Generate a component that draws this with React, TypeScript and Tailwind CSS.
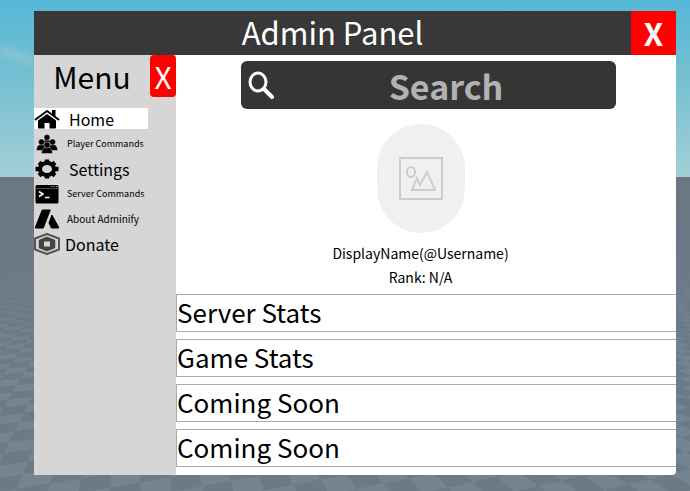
import type { ReactNode } from "react";

type MenuItem = {
  label: string;
  icon: ReactNode;
  textClass: string;
  active?: boolean;
};

function HomeIcon() {
  return (
    <svg className="w-[26px] h-5" viewBox="0 0 52 40" aria-hidden="true">
      <path d="M3 21 26 4l23 17" fill="none" stroke="black" strokeWidth="4" strokeLinecap="round" strokeLinejoin="round" />
      <path d="M36 2h7v14l-7-6z" />
      <path d="M26 10 44 23v14a2 2 0 0 1-2 2H31V28H21v11H10a2 2 0 0 1-2-2V23z" />
    </svg>
  );
}

function PlayersIcon() {
  return (
    <svg className="w-[26px] h-5" viewBox="0 0 52 40" stroke="#d6d6d6" aria-hidden="true">
      <path d="M17 22c0-7 4-11 9-11s9 4 9 11z" />
      <circle cx="26" cy="7" r="6" />
      <path d="M5 33c0-8 3-12 10-12s10 4 10 12z" />
      <path d="M27 33c0-8 3-12 10-12s10 4 10 12z" />
      <circle cx="15" cy="16" r="6" />
      <circle cx="37" cy="16" r="6" />
      <path d="M15 39c0-8 4-13 11-13s11 5 11 13z" />
      <circle cx="26" cy="22" r="6" />
    </svg>
  );
}

function GearIcon() {
  return (
    <svg className="w-[26px] h-5" viewBox="0 0 52 40" aria-hidden="true">
      <ellipse cx="26" cy="20" rx="14" ry="12" fill="none" stroke="black" strokeWidth="8" />
      <path
        d="M26 1v7M26 32v7M3 20h7M42 20h7M10 7l5 4M37 29l5 4M42 7l-5 4M15 29l-5 4"
        stroke="black"
        strokeWidth="9"
      />
    </svg>
  );
}

function TerminalIcon() {
  return (
    <svg className="w-[26px] h-5" viewBox="0 0 52 40" aria-hidden="true">
      <path d="M6 2h40a3 3 0 0 1 3 3v31a3 3 0 0 1-3 3H6a3 3 0 0 1-3-3V5a3 3 0 0 1 3-3z" />
      <path d="M3 9h46" stroke="#8a8a8a" />
      <path d="m10 15 8 5-8 5M22 27h9" fill="none" stroke="white" strokeWidth="3" />
      <path d="M34 5h3M39 5h3M44 5h3" stroke="#999999" strokeWidth="2" />
    </svg>
  );
}

function AdminifyIcon() {
  return (
    <svg className="w-[26px] h-5" viewBox="0 0 52 40" aria-hidden="true">
      <path d="M19 1h13a1 1 0 0 1 1 2L20 37a3 3 0 0 1-3 2H4a2 2 0 0 1-2-3L15 3a4 4 0 0 1 4-2z" />
      <path d="M36 12c1 0 2 1 2 2l12 22a2 2 0 0 1-2 3H37a4 4 0 0 1-4-3l-4-8 5-14c0-1 1-2 2-2z" />
    </svg>
  );
}

function DonateIcon() {
  return (
    <svg className="w-[26px] h-[22px]" viewBox="0 0 52 44" aria-hidden="true">
      <path d="M26 2 50 11v22L26 42 2 33V11z" fill="none" stroke="#555555" strokeWidth="4" strokeLinejoin="round" />
      <path d="m26 9 15 6v14l-15 6-15-6V15z" fill="#444444" stroke="#444444" strokeWidth="3" strokeLinejoin="round" />
      <path d="M20 17h12v10H20z" fill="#d6d6d6" />
    </svg>
  );
}

function SearchIcon() {
  return (
    <svg className="w-7 h-7" viewBox="0 0 28 28" fill="none" stroke="white" strokeWidth="3" aria-hidden="true">
      <ellipse cx="10" cy="11" rx="8" ry="9" />
      <path d="m16 18 8 8" strokeWidth="4" strokeLinecap="round" />
    </svg>
  );
}

function PicturePlaceholder() {
  return (
    <svg className="w-11 h-11" viewBox="0 0 44 44" fill="none" stroke="#cdcdcd" strokeWidth="2" aria-hidden="true">
      <path d="M1 1h42v41H1z" />
      <ellipse cx="12" cy="15" rx="4" ry="5" />
      <path d="m13 33 5-12 3 7 7-13 8 18z" />
    </svg>
  );
}

const HORIZON = 177;
const FOCAL = 560;
const TILE = 0.093;
const ANGLE = 0.35;

// Ground plane point to screen point
function project(col: number, row: number) {
  const x = (col * Math.cos(ANGLE) - row * Math.sin(ANGLE)) * TILE;
  const z = (col * Math.sin(ANGLE) + row * Math.cos(ANGLE)) * TILE;
  return { x: 345 + (FOCAL * x) / z, y: HORIZON + FOCAL / z, z };
}

function tilePath() {
  let d = "";
  for (let row = -40; row < 130; row++) {
    for (let col = -60; col < 110; col++) {
      if ((row + col) % 2 !== 0) continue;
      const corners = [
        project(col, row),
        project(col + 1, row),
        project(col + 1, row + 1),
        project(col, row + 1),
      ];
      const onScreen = corners.every((p) => p.z > 1.5 && p.z < 9 && p.x > -40 && p.x < 730);
      if (!onScreen) continue;
      d += `M${corners.map((p) => `${p.x.toFixed(1)} ${p.y.toFixed(1)}`).join("L")}z`;
    }
  }
  return d;
}

const tiles = tilePath();

function Scenery() {
  return (
    <svg
      className="absolute inset-0 -z-10 w-full h-full"
      viewBox="0 0 690 491"
      preserveAspectRatio="none"
      aria-hidden="true"
    >
      <defs>
        <linearGradient id="sky" x1="0" y1="0" x2="0" y2="1">
          <stop offset="0" stopColor="#55b8d6" />
          <stop offset="0.4" stopColor="#72bfd2" />
          <stop offset="1" stopColor="#a3cfd6" />
        </linearGradient>
        <linearGradient id="haze" x1="0" y1="0" x2="0" y2="1">
          <stop offset="0" stopColor="#6c7783" />
          <stop offset="0.2" stopColor="#6b7885" />
          <stop offset="0.6" stopColor="#6b7a87" stopOpacity="0" />
        </linearGradient>
        <filter id="soft" x="-20%" y="-50%" width="140%" height="200%">
          <feGaussianBlur stdDeviation="3" />
        </filter>
      </defs>
      <rect width="690" height="178" fill="url(#sky)" />
      <path d="M0 47c10-1 22 6 34 11v8C22 62 12 58 0 57z" fill="#a3cdd5" opacity="0.5" filter="url(#soft)" />
      <rect y="177" width="690" height="314" fill="#6b7a87" />
      <path d={tiles} fill="#7b8b98" opacity="0.6" />
      <rect y="177" width="690" height="314" fill="url(#haze)" />
    </svg>
  );
}

const menuItems: MenuItem[] = [
  { label: "Home", icon: <HomeIcon />, textClass: "text-base pl-[7px]", active: true },
  { label: "Player Commands", icon: <PlayersIcon />, textClass: "text-[9px] pl-[5px]" },
  { label: "Settings", icon: <GearIcon />, textClass: "text-base pl-[7px]" },
  { label: "Server Commands", icon: <TerminalIcon />, textClass: "text-[9px] pl-[5px]" },
  { label: "About Adminify", icon: <AdminifyIcon />, textClass: "text-[10px] pl-[5px]" },
  { label: "Donate", icon: <DonateIcon />, textClass: "text-base pl-[3px]" },
];

const sections = ["Server Stats", "Game Stats", "Coming Soon", "Coming Soon"];

export default function App() {
  return (
    <div className="relative isolate flex min-h-screen flex-col pt-[11px] pr-[14px] pb-4 pl-[34px] font-['Noto_Sans_CJK_SC','Noto_Sans',sans-serif] text-black">
      <Scenery />

      <header className="flex h-11 items-stretch bg-[#383838] text-white">
        <h1 className="flex-1 text-center text-[31px] leading-[42px]">Admin Panel</h1>
        <button
          type="button"
          aria-label="Close panel"
          className="w-[45px] bg-[#ff0000] text-[31px] leading-[42px] font-bold"
        >
          X
        </button>
      </header>

      <div className="flex flex-1 rounded-br bg-white">
        <aside className="w-[142px] shrink-0 bg-[#d6d6d6]">
          <div className="flex">
            <h2 className="flex-1 text-center text-[30px] leading-[42px]">Menu</h2>
            <button
              type="button"
              aria-label="Close menu"
              className="h-[42px] w-[26px] rounded bg-[#ff0000] text-[30px] leading-[42px] text-white"
            >
              X
            </button>
          </div>

          <nav className="mt-[11px] mr-7 flex flex-col gap-1">
            {menuItems.map((item) => (
              <button
                key={item.label}
                type="button"
                className={`flex h-[21px] items-center whitespace-nowrap ${item.active ? "bg-white" : ""}`}
              >
                <span className="flex w-7 shrink-0 items-center">{item.icon}</span>
                <span className={`leading-5 ${item.textClass}`}>{item.label}</span>
              </button>
            ))}
          </nav>
        </aside>

        <main className="flex min-w-0 flex-1 flex-col">
          <label className="mt-[6px] ml-[13%] flex h-12 w-3/4 items-center rounded-md bg-[#353535] pl-[7px]">
            <SearchIcon />
            <input
              type="text"
              aria-label="Search"
              placeholder="Search"
              className="h-full min-w-0 flex-1 bg-transparent text-center text-[34px] font-bold text-white outline-none placeholder:text-[#b2b2b2]"
            />
          </label>

          <div className="mt-[15px] flex flex-col items-center pr-[11px]">
            <div className="flex h-[109px] w-[88px] items-center justify-center rounded-[44px] bg-[#f0f0f0]">
              <PicturePlaceholder />
            </div>
            <p className="mt-2 text-[14px] leading-6">DisplayName(@Username)</p>
            <p className="text-[14px] leading-6">Rank: N/A</p>
          </div>

          <div className="mt-[5px] flex flex-col gap-[7px]">
            {sections.map((title, i) => (
              <button
                key={i}
                type="button"
                className="flex h-[38px] items-start border border-r-0 border-[#aaaaaa] text-left text-[26px] leading-[34px]"
              >
                {title}
              </button>
            ))}
          </div>
        </main>
      </div>
    </div>
  );
}
